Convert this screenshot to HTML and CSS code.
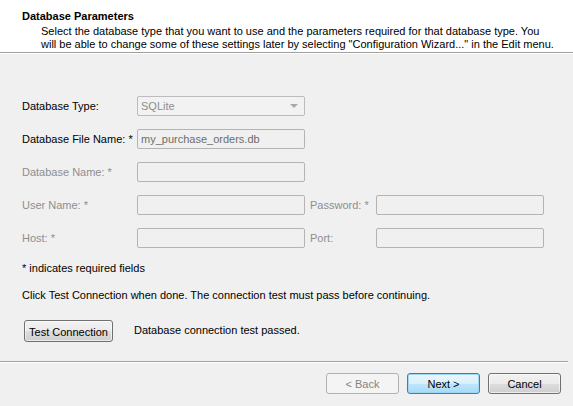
FILE: index.html
```html
<!DOCTYPE html>
<html>
<head>
<meta charset="utf-8">
<link rel="stylesheet" href="styles.css">
</head>
<body>
<div class="dialog">
  <div class="header">
    <div class="title">Database Parameters</div>
    <div class="desc">Select the database type that you want to use and the parameters required for that database type. You<br>will be able to change some of these settings later by selecting "Configuration Wizard..." in the Edit menu.</div>
  </div>
  <div class="content">
    <div class="form">
      <div class="label">Database Type:</div>
      <div class="field combo"><span class="val muted">SQLite</span><span class="arrow"></span></div>
      <div class="spacer"></div>
      <div class="spacer"></div>

      <div class="label">Database File Name: *</div>
      <div class="field"><span class="val">my_purchase_orders.db</span></div>
      <div class="spacer"></div>
      <div class="spacer"></div>

      <div class="label off">Database Name: *</div>
      <div class="field"></div>
      <div class="spacer"></div>
      <div class="spacer"></div>

      <div class="label off">User Name: *</div>
      <div class="field"></div>
      <div class="label off second">Password: *</div>
      <div class="field"></div>

      <div class="label off">Host: *</div>
      <div class="field"></div>
      <div class="label off second">Port:</div>
      <div class="field"></div>
    </div>
    <div class="note">* indicates required fields</div>
    <div class="note click">Click Test Connection when done. The connection test must pass before continuing.</div>
    <div class="test-row">
      <button class="btn test">Test Connection</button>
      <span class="status">Database connection test passed.</span>
    </div>
  </div>
  <div class="footer">
    <button class="btn disabled">&lt; Back</button>
    <button class="btn default">Next &gt;</button>
    <button class="btn">Cancel</button>
  </div>
</div>
</body>
</html>
```
FILE: styles.css
```css
html, body {
  margin: 0;
  padding: 0;
}
body {
  background: #f0f0f0;
  font-family: "Liberation Sans", Arial, sans-serif;
  font-size: 11px;
  color: #000;
  width: 573px;
  height: 406px;
  overflow: hidden;
}
.dialog {
  display: flex;
  flex-direction: column;
  height: 406px;
}
.header {
  background: #fff;
  height: 42px;
  padding: 10px 0 0 0;
  border-bottom: 1px solid #a0a0a0;
  box-shadow: 0 1px 0 #ffffff;
  line-height: 13px;
}
.title {
  font-weight: bold;
  padding-left: 22px;
  margin-bottom: 2px;
}
.desc {
  padding-left: 41px;
  white-space: nowrap;
}
.content {
  padding: 43px 0 0 22px;
  flex: 1;
}
.form {
  display: grid;
  grid-template-columns: 115px 168px 71px 168px;
  grid-auto-rows: 20px;
  row-gap: 13px;
  align-items: center;
}
.label {
  white-space: nowrap;
}
.label.off {
  color: #8e8e8e;
}
.label.second {
  padding-left: 5px;
}
.field {
  box-sizing: border-box;
  height: 20px;
  border: 1px solid #b4b4b4;
  border-radius: 2px;
  background: #f0f0f0;
  display: flex;
  align-items: center;
  padding-left: 3px;
  color: #6d6d6d;
}
.field .val {
  white-space: nowrap;
}
.field .muted {
  color: #8d8d8d;
}
.combo {
  justify-content: space-between;
  padding-right: 6px;
  background: #f2f2f2;
  border-color: #bcbcbc;
}
.arrow {
  width: 0;
  height: 0;
  border-left: 4px solid transparent;
  border-right: 4px solid transparent;
  border-top: 4px solid #a8a8a8;
}
.note {
  line-height: 13px;
  margin-top: 14px;
}
.note.click {
  margin-top: 14px;
}
.test-row {
  display: flex;
  align-items: center;
  margin-top: 18px;
  padding-left: 2px;
}
.status {
  margin-left: 21px;
  margin-top: -3px;
}
.btn {
  box-sizing: border-box;
  font-family: "Liberation Sans", Arial, sans-serif;
  font-size: 11px;
  color: #000;
  height: 21px;
  padding: 0;
  border: 1px solid #707070;
  border-radius: 3px;
  background: linear-gradient(#f2f2f2 0%, #ebebeb 50%, #dddddd 51%, #cfcfcf 100%);
  box-shadow: inset 0 0 0 1px rgba(255,255,255,0.6);
}
.btn.test {
  width: 89px;
  height: 22px;
  padding-top: 2px;
}
.footer {
  border-top: 1px solid #a0a0a0;
  box-shadow: inset 0 1px 0 #ffffff;
  margin: 0 5px 0 0;
  height: 45px;
  display: flex;
  justify-content: flex-end;
  align-items: flex-start;
  padding: 11px 7px 0 0;
  gap: 8px;
  box-sizing: border-box;
}
.footer .btn {
  width: 73px;
}
.btn.disabled {
  border-color: #adb2b5;
  background: #f4f4f4;
  color: #838383;
  box-shadow: none;
}
.btn.default {
  border-color: #3c7fb1;
  background: linear-gradient(#eaf6fd 0%, #d9f0fc 50%, #bee6fd 51%, #a7d9f5 100%);
  box-shadow: inset 0 0 0 1px #9fd6f3;
}
```
